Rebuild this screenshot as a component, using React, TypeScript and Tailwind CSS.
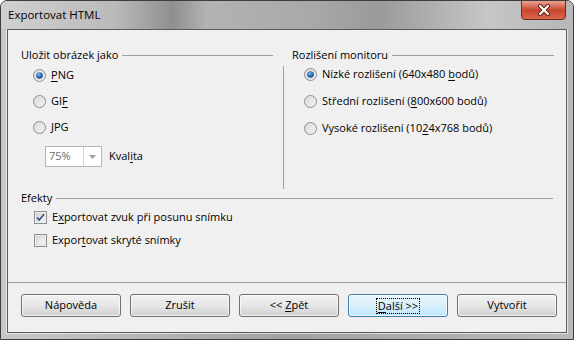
import React from "react";

const font = { fontFamily: '"Open Sans", "Noto Sans", sans-serif' };

const Radio = ({ checked }: { checked?: boolean }) => (
  <svg width="13" height="13" viewBox="0 0 13 13" className="shrink-0">
    <defs>
      <linearGradient id="rbg" x1="0" y1="0" x2="1" y2="1">
        <stop offset="0" stopColor="#d4d4d4" />
        <stop offset="1" stopColor="#f8f8f8" />
      </linearGradient>
      <radialGradient id="rdot" cx="0.4" cy="0.35" r="0.7">
        <stop offset="0" stopColor="#8ec4f0" />
        <stop offset="0.5" stopColor="#2f74bd" />
        <stop offset="1" stopColor="#153d78" />
      </radialGradient>
    </defs>
    <circle cx="6.5" cy="6.5" r="6" fill="url(#rbg)" stroke="#8c8c8c" strokeWidth="1" />
    <circle cx="6.5" cy="6.5" r="4.6" fill="none" stroke="#e6e6e6" strokeWidth="0.8" />
    {checked && <circle cx="6.5" cy="6.5" r="3.3" fill="url(#rdot)" />}
  </svg>
);

const Check = ({ checked }: { checked?: boolean }) => (
  <svg width="13" height="13" viewBox="0 0 13 13" className="shrink-0">
    <defs>
      <linearGradient id="cbg" x1="0" y1="0" x2="1" y2="1">
        <stop offset="0" stopColor="#d6d6d6" />
        <stop offset="1" stopColor="#fbfbfb" />
      </linearGradient>
    </defs>
    <rect x="0.5" y="0.5" width="12" height="12" fill="#fff" stroke="#8f8f8f" />
    <rect x="2" y="2" width="9" height="9" fill="url(#cbg)" stroke="#c8c8c8" strokeWidth="0.6" />
    {checked && (
      <path d="M3 6.5 L5.2 9 L10 3.2" fill="none" stroke="#3b4f8a" strokeWidth="1.8" strokeLinejoin="round" />
    )}
  </svg>
);

const U = ({ children }: { children: React.ReactNode }) => <span className="underline underline-offset-2">{children}</span>;

const Header = ({ label, className = "" }: { label: string; className?: string }) => (
  <div className={`flex h-[16px] items-center ${className}`}>
    <span className="whitespace-nowrap pr-[4px]">{label}</span>
    <div className="h-px flex-1 bg-[#a0a0a0]" />
  </div>
);

const Row = ({ children, className = "" }: { children: React.ReactNode; className?: string }) => (
  <div className={`flex h-[16px] items-center gap-[5px] whitespace-nowrap ${className}`}>{children}</div>
);

const Btn = ({ children, primary }: { children: React.ReactNode; primary?: boolean }) => (
  <div
    className={`flex h-[23px] w-[100px] items-center justify-center rounded-[3px] border ${
      primary
        ? "border-[#3c7fb1] bg-gradient-to-b from-[#eaf6fd] via-[#d9f0fc] to-[#bee6fd]"
        : "border-[#707070] bg-gradient-to-b from-[#f2f2f2] via-[#e6e6e6] to-[#d0d0d0]"
    } shadow-[inset_0_0_0_1px_rgba(255,255,255,0.7)]`}
  >
    <span className={`whitespace-pre ${primary ? "border border-dotted border-black px-[1px] leading-[14px]" : ""}`}>
      {children}
    </span>
  </div>
);

export default function App() {
  return (
    <div
      style={font}
      className="flex h-[340px] w-[574px] flex-col overflow-hidden rounded-t-[7px] border border-[#3d3d3d] bg-gradient-to-r from-[#c8c8c8] via-[#a2a2a2] to-[#b9b9b9] text-[11px] text-black"
    >
      <div className="relative flex h-[28px] shrink-0 items-center bg-[linear-gradient(90deg,#d0d0d0_0%,#bababa_20%,#8f8f8f_30%,#b3b3b3_36%,#a8a8a8_55%,#9a9a9a_66%,#c6c6c6_85%,#b6b6b6_100%)] pl-[7px]">
        <span className="text-[11.5px] leading-none">Exportovat HTML</span>
        <div className="absolute right-[7px] top-[-1px] flex h-[20px] w-[45px] items-center justify-center rounded-b-[4px] border border-[#6e2b22] bg-gradient-to-b from-[#e8a493] via-[#c8452e] to-[#d9664c]">
          <svg width="14" height="12" viewBox="0 0 14 12">
            <path d="M3 2 L11 10 M11 2 L3 10" stroke="#5a1d14" strokeWidth="4" strokeLinecap="round" />
            <path d="M3 2 L11 10 M11 2 L3 10" stroke="#ffffff" strokeWidth="2.2" strokeLinecap="round" />
          </svg>
        </div>
      </div>
      <div className="mx-[6px] mb-[6px] flex flex-1 flex-col border border-[#5a5a5a] bg-[#f0f0f0] shadow-[0_0_0_1px_rgba(255,255,255,0.6)]">
        <div className="flex h-[159px] pt-[17px]">
          <div className="ml-[13px] w-[252px]">
            <Header label="Uložit obrázek jako" />
            <div className="mt-[4px] flex flex-col gap-[10px] pl-[12px]">
              <Row><Radio checked /><span><U>P</U>NG</span></Row>
              <Row><Radio /><span>GI<U>F</U></span></Row>
              <Row><Radio /><span>JPG</span></Row>
            </div>
            <div className="mt-[11px] flex items-center gap-[7px] pl-[24px]">
              <div className="flex h-[21px] w-[57px] border border-[#b5b5b5] bg-white">
                <span className="flex flex-1 items-center pl-[3px] text-[#6d6d6d]">75%</span>
                <div className="flex w-[18px] items-center justify-center border-l border-[#d5d5d5]">
                  <svg width="7" height="4" viewBox="0 0 7 4"><path d="M0 0 H7 L3.5 4 Z" fill="#a0a0a0" /></svg>
                </div>
              </div>
              <span>Kval<U>i</U>ta</span>
            </div>
          </div>
          <div className="ml-[10px] flex w-[271px] flex-col">
            <Header label="Rozlišení monitoru" className="pl-[9px]" />
            <div className="mt-[3px] flex h-[123px] flex-col gap-[11px] border-l border-[#a0a0a0] pl-[20px]">
              <Row><Radio checked /><span>Nízké rozlišení (640x480 <U>b</U>odů)</span></Row>
              <Row><Radio /><span>Střední rozlišení (<U>8</U>00x600 bodů)</span></Row>
              <Row><Radio /><span>Vysoké rozlišení (10<U>2</U>4x768 bodů)</span></Row>
            </div>
          </div>
        </div>
        <div className="mx-[13px] mt-px w-[532px]">
          <Header label="Efekty" />
          <div className="mt-[3px] flex flex-col gap-[7px] pl-[13px]">
            <Row><Check checked /><span>E<U>x</U>portovat zvuk při posunu snímku</span></Row>
            <Row><Check /><span>Expor<U>t</U>ovat skryté snímky</span></Row>
          </div>
        </div>
        <div className="mt-[34px] h-px bg-[#a0a0a0]" />
        <div className="mt-[11px] flex gap-[9px] pl-[13px]">
          <Btn>Nápověda</Btn>
          <Btn>Zrušit</Btn>
          <Btn>{"<< "}<U>Z</U>pět</Btn>
          <Btn primary><U>D</U>alší {">>"}</Btn>
          <Btn>Vytvořit</Btn>
        </div>
      </div>
    </div>
  );
}
